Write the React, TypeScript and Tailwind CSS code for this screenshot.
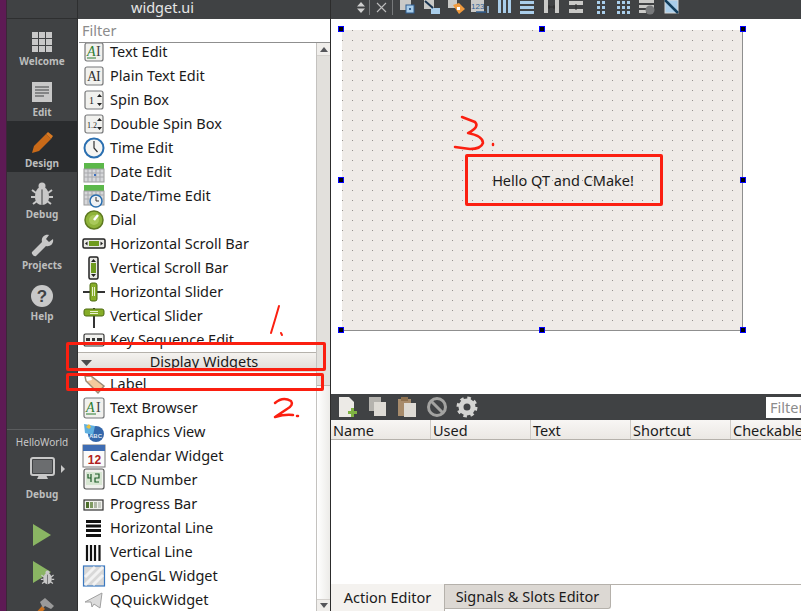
import type { ReactNode } from "react";

const font = "font-['Noto_Sans',sans-serif]";

function Box({ children }: { children: ReactNode }) {
  return (
    <svg width="24" height="24" viewBox="0 0 24 24">
      {children}
    </svg>
  );
}

const frame = (
  <rect x="3" y="3" width="18" height="18" rx="2" fill="#f1f1ee" stroke="#77787a" strokeWidth="1.2" />
);

const serif = "'Liberation Serif',serif";

const icons: Record<string, ReactNode> = {
  text: (
    <Box>
      {frame}
      <text x="5" y="16" fontFamily={serif} fontSize="14" fontStyle="italic" fill="#2e7d32">A</text>
      <text x="14" y="16" fontFamily={serif} fontSize="14" fill="#444">I</text>
      <path d="M5 18h9" stroke="#2e7d32" />
    </Box>
  ),
  plain: (
    <Box>
      {frame}
      <text x="5" y="17" fontFamily={serif} fontSize="14" fill="#333">A</text>
      <text x="14" y="17" fontFamily={serif} fontSize="14" fill="#333">I</text>
    </Box>
  ),
  spin: (
    <Box>
      {frame}
      <text x="7" y="16" fontFamily={serif} fontSize="10" fill="#222">1</text>
      <path d="M15 9l2.500-3 2.500 3zM15 15l2.500 3 2.500-3z" fill="#222" />
    </Box>
  ),
  dspin: (
    <Box>
      {frame}
      <text x="5" y="16" fontFamily={serif} fontSize="8" fill="#222">1.2</text>
      <path d="M15 9l2.500-3 2.500 3zM15 15l2.500 3 2.500-3z" fill="#222" />
    </Box>
  ),
  time: (
    <Box>
      <circle cx="12" cy="12" r="9.500" fill="#f4f4f2" stroke="#2a6fb0" strokeWidth="2" />
      <path d="M12 5v7l3.500 4" fill="none" stroke="#333" strokeWidth="1.200" />
    </Box>
  ),
  date: (
    <Box>
      <rect x="2" y="3" width="20" height="6" fill="#5cb84a" />
      <rect x="2" y="9" width="20" height="13" fill="#d6d7da" stroke="#9a9a9a" />
      <path d="M6 9v13M10 9v13M14 9v13M18 9v13M2 13h20M2 17h20" stroke="#a8a9ad" />
      <rect x="12" y="14" width="2" height="2" fill="#3a6fc0" />
    </Box>
  ),
  datetime: (
    <Box>
      <rect x="2" y="1" width="20" height="6" fill="#5cb84a" />
      <rect x="2" y="7" width="20" height="14" fill="#d6d7da" stroke="#9a9a9a" />
      <path d="M6 7v14M10 7v14M14 7v14M18 7v14M2 11h20M2 15h20" stroke="#a8a9ad" />
      <circle cx="14" cy="17" r="6" fill="#eef1f4" stroke="#2a6fb0" strokeWidth="1.500" />
      <path d="M14 13v4h3" fill="none" stroke="#333" />
    </Box>
  ),
  dial: (
    <Box>
      <circle cx="12" cy="12" r="9" fill="#8fb43a" stroke="#5e7a20" strokeWidth="1.500" />
      <circle cx="12" cy="12" r="5" fill="#a9c95a" />
      <path d="M12 12l4-5" stroke="#fff" strokeWidth="2.500" />
    </Box>
  ),
  hscroll: (
    <Box>
      <rect x="1" y="7" width="22" height="9" rx="1.500" fill="#e8e8e4" stroke="#222" strokeWidth="1.500" />
      <rect x="7" y="9" width="10" height="5" fill="#6e9a1e" />
      <path d="M5.500 9.500L3 11.500l2.500 2zM18.500 9.500l2.500 2-2.500 2z" fill="#222" />
    </Box>
  ),
  vscroll: (
    <Box>
      <rect x="7" y="1" width="9" height="22" rx="1.500" fill="#e8e8e4" stroke="#222" strokeWidth="1.500" />
      <rect x="9" y="7" width="5" height="10" fill="#6e9a1e" />
      <path d="M9 6l2.500-3 2.500 3zM9 18l2.500 3 2.500-3z" fill="#222" />
    </Box>
  ),
  hslider: (
    <Box>
      <path d="M1 12h22" stroke="#333" strokeWidth="2" />
      <rect x="8" y="3" width="7" height="18" rx="2" fill="#86ad28" stroke="#4d6b12" />
      <path d="M10.500 7v9M12.500 7v9" stroke="#e8f0d0" />
    </Box>
  ),
  vslider: (
    <Box>
      <path d="M12 4v20" stroke="#333" strokeWidth="2" />
      <rect x="2" y="5" width="20" height="7" rx="2" fill="#86ad28" stroke="#4d6b12" />
      <path d="M8 7.500h8M8 9.500h8" stroke="#e8f0d0" />
    </Box>
  ),
  keyseq: (
    <Box>
      <rect x="2" y="6" width="20" height="12" rx="1.500" fill="#f1f1ee" stroke="#333" strokeWidth="1.200" />
      <path d="M4 10h4v3H4zM10 10h3v3h-3zM15 10h5v3h-5z" fill="#333" />
    </Box>
  ),
  label: (
    <Box>
      <path d="M3 4h6l13 10-6 7L4 9z" fill="#f4c89c" stroke="#9a8a76" strokeWidth="1.500" />
      <path d="M4 5l5 0 1 3-5 1z" fill="#fff" />
    </Box>
  ),
  browser: (
    <Box>
      <rect x="2" y="2" width="20" height="20" rx="2" fill="#f1f1ee" stroke="#77787a" strokeWidth="1.200" />
      <text x="4" y="16" fontFamily={serif} fontSize="14" fontStyle="italic" fill="#2e7d32">A</text>
      <text x="14" y="16" fontFamily={serif} fontSize="14" fill="#444">I</text>
      <path d="M4 18h10" stroke="#2e7d32" />
    </Box>
  ),
  graphics: (
    <Box>
      <circle cx="14" cy="14" r="8" fill="#3366aa" />
      <path d="M2 4l11 2-2 9-8-2z" fill="#5fb0e0" />
      <path d="M4 7l3-3 2 3-2 2z" fill="#e8c040" />
      <text x="7" y="18" fontFamily="'Liberation Sans',sans-serif" fontSize="6" fontWeight="bold" fill="#dfe8f2">ABC</text>
    </Box>
  ),
  calendar: (
    <Box>
      <rect x="1" y="1" width="22" height="22" fill="#fbfbfb" stroke="#777" />
      <rect x="1" y="1" width="22" height="6" fill="#3f6db3" />
      <text x="12.500" y="20" textAnchor="middle" fontFamily="'Liberation Sans',sans-serif" fontSize="12" fontWeight="bold" fill="#b02020">12</text>
    </Box>
  ),
  lcd: (
    <Box>
      <rect x="2" y="1" width="20" height="20" rx="2" fill="#f1f1ee" stroke="#555" strokeWidth="1.200" />
      <rect x="4" y="4" width="16" height="13" fill="#d7e6d2" />
      <path d="M6 6v4h3M9 6v8M13 6h4v4h-4v4h4" fill="none" stroke="#1f5c28" strokeWidth="1.200" />
    </Box>
  ),
  progress: (
    <Box>
      <rect x="2" y="8" width="19" height="10" fill="#f0f0ec" stroke="#333" strokeWidth="1.200" />
      <rect x="4" y="10" width="3" height="6" fill="#4c6e2a" />
      <rect x="8" y="10" width="3" height="6" fill="#7f9a62" />
      <rect x="12" y="10" width="3" height="6" fill="#b0b8a6" />
      <rect x="16" y="10" width="3" height="6" fill="#c8ccc4" />
    </Box>
  ),
  hline: (
    <Box>
      <path d="M4 5.500h15M4 10h15M4 14.500h15M4 19.500h15" stroke="#111" strokeWidth="3" />
    </Box>
  ),
  vline: (
    <Box>
      <path d="M5 5v16M9 5v16M13 5v16M17.500 5v16" stroke="#111" strokeWidth="2.200" />
    </Box>
  ),
  opengl: (
    <Box>
      <rect x="1.500" y="2" width="21" height="20" fill="#d8d8d8" stroke="#3a78c0" strokeWidth="1.200" />
      <path d="M3 13L13 3M3 21L21 3M11 21l10-10" stroke="#f2f2f2" strokeWidth="3" />
    </Box>
  ),
  quick: (
    <Box>
      <path d="M3 14L20 5l-2 15-6-4-2 3-1-5z" fill="#dcdcdc" stroke="#a0a0a0" />
    </Box>
  ),
};

const topWidgets: [string, string][] = [
  ["text", "Text Edit"],
  ["plain", "Plain Text Edit"],
  ["spin", "Spin Box"],
  ["dspin", "Double Spin Box"],
  ["time", "Time Edit"],
  ["date", "Date Edit"],
  ["datetime", "Date/Time Edit"],
  ["dial", "Dial"],
  ["hscroll", "Horizontal Scroll Bar"],
  ["vscroll", "Vertical Scroll Bar"],
  ["hslider", "Horizontal Slider"],
  ["vslider", "Vertical Slider"],
  ["keyseq", "Key Sequence Edit"],
];

const displayWidgets: [string, string][] = [
  ["label", "Label"],
  ["browser", "Text Browser"],
  ["graphics", "Graphics View"],
  ["calendar", "Calendar Widget"],
  ["lcd", "LCD Number"],
  ["progress", "Progress Bar"],
  ["hline", "Horizontal Line"],
  ["vline", "Vertical Line"],
  ["opengl", "OpenGL Widget"],
  ["quick", "QQuickWidget"],
];

function WidgetRow({ icon, name }: { icon: string; name: string }) {
  return (
    <div className="flex items-center h-6 pl-[4px] gap-[4px] shrink-0">
      {icons[icon]}
      <span className="text-[14.5px] text-[#1a1a1a] leading-none whitespace-nowrap mb-[2px]">{name}</span>
    </div>
  );
}

function SideTab({ icon, label, active }: { icon: ReactNode; label: string; active?: boolean }) {
  return (
    <div className={`h-[51px] shrink-0 pt-[5px] flex flex-col items-center justify-center ${active ? "bg-[#2a2c2e]" : ""}`}>
      {icon}
      <span className="text-[10px] font-bold leading-[13px] text-[#bcbdbd]">{label}</span>
    </div>
  );
}

const gray = "#c8c8c8";

function Bug({ size = 28 }: { size?: number }) {
  return (
    <svg width={size} height={size} viewBox="0 0 28 28">
      <path d="M14 7c5 0 7 5 7 10s-3 8-7 8-7-3-7-8 2-10 7-10z" fill={gray} />
      <path d="M14 8v17" stroke="#404244" />
      <path d="M4 10l4 3M24 10l-4 3M3 17h4M25 17h-4M5 24l4-3M23 24l-4-3" stroke={gray} strokeWidth="2" />
      <circle cx="14" cy="6" r="3.500" fill={gray} />
    </svg>
  );
}

function Sidebar() {
  return (
    <div className="w-[71px] shrink-0 h-full overflow-hidden bg-[#404244] flex flex-col border-r border-[#2e2f30]">
      <div className="h-[19px] border-b border-[#2e2f30] shrink-0" />
      <SideTab
        label="Welcome"
        icon={
          <svg width="28" height="28" viewBox="0 0 28 28">
            <path d="M4 5h6v6H4zM11 5h6v6h-6zM18 5h6v6h-6zM4 12h6v6H4zM11 12h6v6h-6zM18 12h6v6h-6zM4 19h6v6H4zM11 19h6v6h-6zM18 19h6v6h-6z" fill={gray} />
          </svg>
        }
      />
      <SideTab
        label="Edit"
        icon={
          <svg width="28" height="28" viewBox="0 0 28 28">
            <rect x="4" y="4" width="20" height="20" fill={gray} />
            <path d="M7 9h14M7 12h14M7 15h14M7 18h9" stroke="#404244" />
          </svg>
        }
      />
      <SideTab
        active
        label="Design"
        icon={
          <svg width="28" height="28" viewBox="0 0 28 28">
            <path d="M4 24l2-7L18 5l5 5-12 12z" fill="#c96a18" />
            <path d="M18 5l2-2 5 4-2 3z" fill="#d97a22" />
          </svg>
        }
      />
      <SideTab label="Debug" icon={<Bug />} />
      <SideTab
        label="Projects"
        icon={
          <svg width="28" height="28" viewBox="0 0 28 28">
            <path d="M4 21l10-10c-1-4 2-8 7-7l-3 4 3 3 4-3c1 5-3 8-7 7L8 25c-2 1-5-2-4-4z" fill={gray} />
          </svg>
        }
      />
      <SideTab
        label="Help"
        icon={
          <svg width="28" height="28" viewBox="0 0 28 28">
            <circle cx="14" cy="14" r="11" fill={gray} />
            <text x="14" y="20" textAnchor="middle" fontFamily="'Liberation Sans',sans-serif" fontSize="17" fontWeight="bold" fill="#404244">?</text>
          </svg>
        }
      />
      <div className="mt-[104px] shrink-0 border-t border-[#5a5c5e] pt-[5px] flex flex-col items-center">
        <span className="text-[10px] leading-[14px] text-[#c8c8c8]">HelloWorld</span>
        <div className="relative mt-[6px]">
          <svg width="28" height="28" viewBox="0 0 28 28">
            <rect x="3" y="3" width="23" height="17" rx="2" fill="#404244" stroke={gray} strokeWidth="2" />
            <rect x="5" y="5" width="19" height="13" fill="#6b6d6f" />
            <path d="M11 20h7l2 4H9z" fill={gray} />
          </svg>
          <svg className="absolute left-[32px] top-[10px]" width="6" height="8" viewBox="0 0 6 8">
            <path d="M1 0l4 4-4 4z" fill={gray} />
          </svg>
        </div>
        <span className="text-[10px] font-bold leading-[14px] text-[#bcbdbd] mt-[4px]">Debug</span>
        <svg className="mt-[21px]" width="24" height="26" viewBox="0 0 24 26">
          <path d="M3 2l18 11L3 24z" fill="#8ab563" />
        </svg>
        <div className="relative mt-[11px] w-[24px] h-[26px]">
          <svg width="24" height="26" viewBox="0 0 24 26">
            <path d="M3 2l18 11L3 24z" fill="#8ab563" />
          </svg>
          <div className="absolute left-[9px] top-[10px]">
            <Bug size={17} />
          </div>
        </div>
        <svg className="mt-[12px]" width="28" height="18" viewBox="0 0 28 18">
          <path d="M6 18l8-9 3 3-6 6z" fill="#c9701e" />
          <path d="M12 5l5-4 9 8-3 3-6-3-2 2z" fill="#9a9a9a" />
        </svg>
      </div>
    </div>
  );
}

function ScrollBar() {
  return (
    <div className="w-[14px] shrink-0 flex flex-col border-l border-[#c4c2bf] bg-[#f2f0ee]">
      <div className="h-[13px] shrink-0 flex items-center justify-center bg-[#f0eeeb] border-b border-[#d4d1cd]">
        <svg width="8" height="5" viewBox="0 0 8 5">
          <path d="M4 0l4 5H0z" fill="#55565a" />
        </svg>
      </div>
      <div className="h-[330px] shrink-0 bg-[#e2e0dc] border-b border-[#b9b6b1]" />
      <div className="flex-1 bg-gradient-to-r from-white to-[#ecebe8]" />
      <div className="h-[12px] shrink-0 flex items-center justify-center bg-[#f0eeeb] border-t border-[#d4d1cd]">
        <svg width="8" height="5" viewBox="0 0 8 5">
          <path d="M0 0h8L4 5z" fill="#55565a" />
        </svg>
      </div>
    </div>
  );
}

function WidgetBox() {
  return (
    <div className="w-[253px] shrink-0 flex flex-col overflow-hidden bg-white border-r border-[#2c2c2c]">
      <div className="h-[19px] shrink-0 bg-[#404244] text-[#e6e6e6] text-[14.5px] leading-[15px] pl-[53px]">
        widget.ui
      </div>
      <div className="h-[24px] border-b border-[#8f8f8f] ml-[1px] pl-[3px] text-[14.5px] leading-[22px] text-[#8c8c8c] shrink-0">
        Filter
      </div>
      <div className="flex-1 min-h-0 flex overflow-hidden">
        <div className="flex-1 min-w-0 -mt-[3px] flex flex-col">
          {topWidgets.map(([icon, name]) => (
            <WidgetRow key={name} icon={icon} name={name} />
          ))}
          <div className="h-[20px] shrink-0 border-t border-[#b5b1ab] bg-gradient-to-b from-[#f4f2ef] to-[#dfdbd6] flex items-center pl-[3px]">
            <svg width="11" height="6" viewBox="0 0 11 6">
              <path d="M0 0h11L5.500 6z" fill="#4c4c4c" />
            </svg>
            <span className="flex-1 text-center text-[14.5px] leading-none text-[#1a1a1a] mb-[2px]">Display Widgets</span>
          </div>
          {displayWidgets.map(([icon, name]) => (
            <WidgetRow key={name} icon={icon} name={name} />
          ))}
        </div>
        <ScrollBar />
      </div>
    </div>
  );
}

function TopToolbar() {
  const c1 = "#c9c9c7";
  const blue = "#a9cdea";
  return (
    <div className="h-[19px] bg-[#404244] flex items-start pt-0 shrink-0 overflow-hidden">
      <svg className="ml-[26px] mt-[2px]" width="8" height="11" viewBox="0 0 8 11">
        <path d="M4 0l4 4.500H0zM4 11l4-4.500H0z" fill="#cfcfcf" />
      </svg>
      <div className="ml-[4px] w-px h-[15px] bg-[#77797b]" />
      <svg className="ml-[5px] mt-[1px]" width="13" height="13" viewBox="0 0 13 13">
        <path d="M2 2l9 9M11 2l-9 9" stroke="#bdbdbd" strokeWidth="1.100" />
      </svg>
      <div className="ml-[4px] w-px h-[15px] bg-[#77797b] mr-[5px]" />
      <div className="flex items-start gap-[4px]">
        <svg width="20" height="19" viewBox="0 0 20 19"><rect x="2" y="0" width="11" height="10" fill={c1} /><rect x="8" y="5" width="8" height="8" fill={blue} stroke="#2f5d8f" /><rect x="11" y="8" width="2" height="2" fill="#2f5d8f" /></svg>
        <svg width="20" height="19" viewBox="0 0 20 19"><rect x="2" y="0" width="10" height="9" fill={c1} /><rect x="9" y="8" width="9" height="6" fill={blue} /><path d="M3 1l8 7" stroke="#17324f" strokeWidth="2" /></svg>
        <svg width="20" height="19" viewBox="0 0 20 19"><rect x="2" y="0" width="9" height="8" fill={c1} /><path d="M7 5l6-2 6 6-6 5z" fill="#f09a3e" /><rect x="11" y="7" width="3" height="3" fill="#fff" /></svg>
        <svg width="20" height="19" viewBox="0 0 20 19"><rect x="1" y="0" width="13" height="12" fill={c1} /><text x="1" y="9" fontSize="8" fontFamily="'Liberation Sans',sans-serif" fill="#2f5d8f">123</text><path d="M6 12h10" stroke="#2f5d8f" strokeWidth="1.500" /><path d="M18 6v7" stroke={blue} strokeWidth="1.500" /></svg>
        <svg width="20" height="19" viewBox="0 0 20 19"><path d="M4 0h3v13H4zM9 0h3v13H9zM14 0h3v13h-3z" fill={blue} /></svg>
        <svg width="20" height="19" viewBox="0 0 20 19"><path d="M2 1h14v3H2zM2 6h14v3H2zM2 11h14v3H2z" fill={blue} /></svg>
        <svg width="20" height="19" viewBox="0 0 20 19"><path d="M2 0h4v13H2zM13 0h4v13h-4z" fill={c1} /><path d="M6 7h7M7 5v4M12 5v4" stroke="#2c2c2c" /></svg>
        <svg width="20" height="19" viewBox="0 0 20 19"><path d="M3 1h14v4H3zM3 9h14v4H3z" fill={c1} /><path d="M10 4v6" stroke="#2c2c2c" /></svg>
        <svg width="20" height="19" viewBox="0 0 20 19"><path d="M7 1h3v3H7zM12 1h3v3h-3zM7 6h3v3H7zM12 6h3v3h-3zM7 11h3v3H7zM12 11h3v3h-3z" fill={blue} /></svg>
        <svg width="20" height="19" viewBox="0 0 20 19"><path d="M3 1h3v3H3zM8 1h3v3H8zM13 1h3v3h-3zM3 6h3v3H3zM8 6h3v3H8zM13 6h3v3h-3zM3 11h3v3H3zM8 11h3v3H8zM13 11h3v3h-3z" fill={blue} /></svg>
        <svg width="20" height="19" viewBox="0 0 20 19"><path d="M1 0h15v3H1zM1 5h15v3H1zM1 10h7v3H1z" fill={c1} /><circle cx="12" cy="10" r="4.500" fill="#77797b" /></svg>
        <svg width="20" height="19" viewBox="0 0 20 19"><rect x="3" y="0" width="13" height="13" fill={blue} stroke="#d6d6d6" /><path d="M3 0l13 13" stroke="#123d5c" strokeWidth="2.500" /></svg>
      </div>
    </div>
  );
}

const handles = [
  "left-[7px] top-[7px]",
  "left-[208px] top-[7px]",
  "left-[409px] top-[7px]",
  "left-[7px] top-[158px]",
  "left-[409px] top-[158px]",
  "left-[7px] top-[308px]",
  "left-[208px] top-[308px]",
  "left-[409px] top-[308px]",
];

function Canvas() {
  return (
    <div className="h-[375px] bg-white shrink-0 relative pl-[11px] pt-[11px]">
      <div className="w-[401px] h-[301px] bg-[#efebe7] border-r border-b border-[#8f8f8f] bg-[radial-gradient(circle_at_0.5px_0.5px,#96938f_0.5px,transparent_0.7px)] bg-[size:10px_10px] flex items-center justify-center">
        <span className="text-[14.5px] leading-none text-[#1a1a1a] relative left-[21px]">Hello QT and CMake!</span>
      </div>
      {handles.map((h) => (
        <div key={h} className={`absolute ${h} w-[6px] h-[6px] bg-black border border-[#0000ff]`} />
      ))}
    </div>
  );
}

function ActionEditor() {
  return (
    <div className="flex-1 flex flex-col bg-white min-h-0">
      <div className="h-[26px] bg-[#404244] flex items-center shrink-0 pl-[5px] gap-[8px]">
        <svg width="22" height="22" viewBox="0 0 22 22"><path d="M3 1h10l5 5v15H3z" fill="#eceae6" /><path d="M12 15h3v-3h3v3h3v3h-3v3h-3v-3h-3z" fill="#7fb342" /></svg>
        <svg width="22" height="22" viewBox="0 0 22 22"><rect x="3" y="1" width="12" height="14" fill="#b5b3ae" /><rect x="8" y="6" width="12" height="14" fill="#dedbd5" /></svg>
        <svg width="22" height="22" viewBox="0 0 22 22"><rect x="2" y="3" width="13" height="17" fill="#a88c6c" /><rect x="5" y="1" width="7" height="4" fill="#8d7150" /><rect x="8" y="7" width="12" height="14" fill="#dedbd5" /></svg>
        <svg width="22" height="22" viewBox="0 0 22 22"><circle cx="11" cy="11" r="8.500" fill="none" stroke="#a3a3a1" strokeWidth="3" /><path d="M5 5l12 12" stroke="#a3a3a1" strokeWidth="3" /></svg>
        <svg width="22" height="22" viewBox="0 0 22 22"><circle cx="11" cy="11" r="6" fill="none" stroke="#d4d4d2" strokeWidth="5" /><circle cx="11" cy="11" r="9" fill="none" stroke="#d4d4d2" strokeWidth="3" strokeDasharray="3.500 3.570" /></svg>
        <div className="ml-auto w-[35px] h-[21px] bg-white text-[14.5px] leading-[21px] pl-[4px] text-[#8c8c8c] overflow-hidden">Filter</div>
      </div>
      <div className="h-[20px] flex shrink-0 border-b border-[#b5b1ab] bg-gradient-to-b from-[#f8f6f4] to-[#ebe8e4] overflow-hidden">
        {["Name", "Used", "Text", "Shortcut", "Checkable"].map((t) => (
          <div key={t} className="w-[100px] shrink-0 border-r border-[#cfcbc6] pl-[2px] text-[14.5px] leading-[20px] text-[#1a1a1a]">
            {t}
          </div>
        ))}
      </div>
      <div className="flex-1" />
      <div className="h-[27px] shrink-0 flex items-end border-t border-[#b5b1ab]">
        <div className="w-[114px] h-[27px] -mt-px bg-[#f4f2ef] border-r border-[#b5b1ab] text-center text-[14.5px] leading-[27px] text-[#1a1a1a]">
          Action Editor
        </div>
        <div className="w-[166px] h-[24px] self-start bg-[#dcd8d3] border-r border-b border-[#b5b1ab] rounded-br-[3px] text-center text-[14.5px] leading-[23px] text-[#1a1a1a]">
          Signals &amp; Slots Editor
        </div>
      </div>
    </div>
  );
}

function Annotations() {
  return (
    <>
      <div className="absolute left-[66px] top-[342px] w-[260px] h-[29px] border-[3px] border-[#fb1f10] rounded-[2px]" />
      <div className="absolute left-[66px] top-[373px] w-[258px] h-[18px] border-[3px] border-[#fb1f10] rounded-[2px]" />
      <div className="absolute left-[465px] top-[154px] w-[198px] h-[52px] border-[3px] border-[#fb1f10] rounded-[2px]" />
      <svg className="absolute left-0 top-0 pointer-events-none" width="801" height="611" viewBox="0 0 801 611">
        <g fill="none" stroke="#fb1f10" strokeWidth="2" strokeLinecap="round" strokeLinejoin="round">
          <path d="M279 306Q275 320 271 333" />
          <path d="M281 333l1 2" />
          <path d="M275 403Q283 396 291 401Q294 405 287 409L275 417Q285 414 293 415" strokeWidth="2.500" />
          <path d="M297 416h1" strokeWidth="2.500" />
          <path d="M462 117L475 122Q480 127 468 133Q483 136 483 143Q481 149 470 149L455 147" strokeWidth="2.500" />
          <path d="M493 144v1" strokeWidth="2.500" />
        </g>
      </svg>
    </>
  );
}

export default function App() {
  return (
    <div className={`relative w-[801px] h-[611px] overflow-hidden flex bg-white ${font}`}>
      <div className="w-[7px] shrink-0 h-full bg-[#5e1a55] border-r border-[#3c2638]" />
      <Sidebar />
      <WidgetBox />
      <div className="flex-1 min-w-0 flex flex-col">
        <TopToolbar />
        <Canvas />
        <ActionEditor />
      </div>
      <Annotations />
    </div>
  );
}
